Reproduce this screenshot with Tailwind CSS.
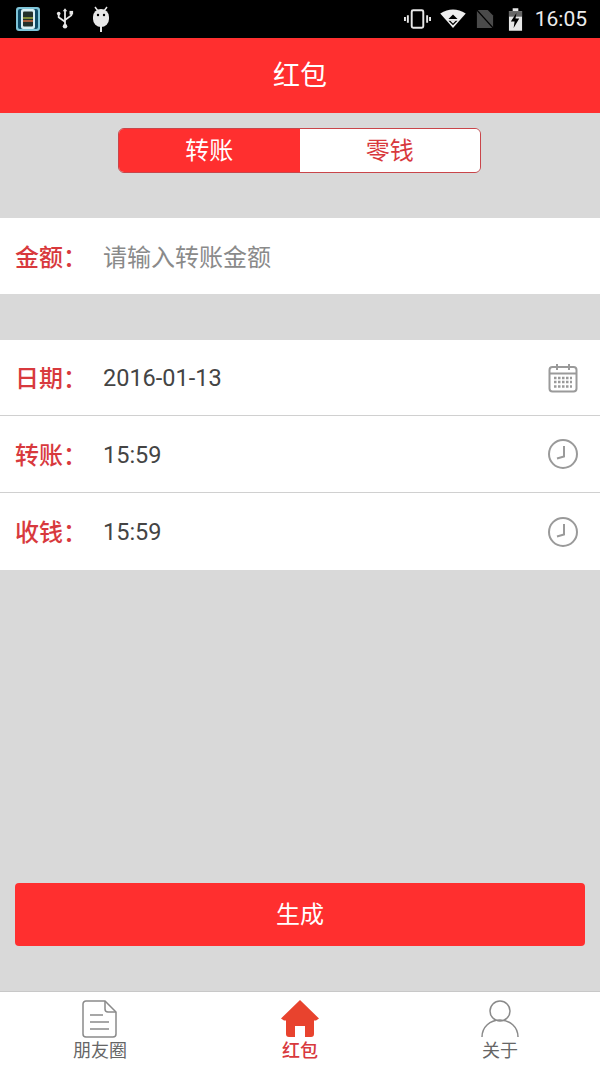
<!DOCTYPE html>
<html lang="zh">
<head>
<meta charset="utf-8">
<script src="https://cdn.jsdelivr.net/npm/@tailwindcss/browser@4"></script>
</head>
<body class="m-0">
<div class="w-[600px] h-[1067px] flex flex-col bg-[#d9d9d9] overflow-hidden font-['Roboto','Noto_Sans_CJK_SC',sans-serif]">
  <!-- status bar -->
  <div class="h-[38px] bg-black flex items-center shrink-0 pl-[15px] pr-[13px]">
    <svg class="w-[26px] h-[26px]" viewBox="0 0 26 26"><rect x="1" y="1" width="24" height="24" rx="3" fill="#7fc4d8"/><rect x="3" y="3" width="20" height="20" rx="2" fill="#0d4a66"/><rect x="6" y="3" width="14" height="20" rx="2" fill="#d8eef4"/><rect x="8" y="5.500" width="10" height="15" rx="1" fill="#22302c"/><rect x="8" y="11" width="10" height="2" fill="#7c8a3a"/><rect x="8" y="14" width="10" height="2" fill="#a85c3c"/></svg>
    <svg class="w-[18px] h-[24px] ml-[15px]" viewBox="0 0 20 24" fill="none" stroke="#e8e8e8" stroke-width="2"><path d="M10 2v18M3 6v4l7 5M17 5v3l-7 5"/><circle cx="10" cy="20" r="2.500" fill="#e8e8e8" stroke="none"/><circle cx="3" cy="6" r="2" fill="#e8e8e8" stroke="none"/><rect x="15" y="3" width="4" height="4" fill="#e8e8e8" stroke="none"/><path d="M10 0l2.500 3.500h-5z" fill="#e8e8e8" stroke="none"/></svg>
    <svg class="w-[20px] h-[26px] ml-[17px]" viewBox="0 0 20 26"><path d="M4 1l3 4M16 1l-3 4" stroke="#e8e8e8" stroke-width="1.500"/><path d="M2 11a8 8 0 0 1 16 0v2a8 8 0 0 1-16 0z" fill="#e8e8e8"/><circle cx="7" cy="9" r="1.200" fill="#000"/><circle cx="13" cy="9" r="1.200" fill="#000"/><rect x="9" y="20" width="2" height="6" fill="#e8e8e8"/></svg>
    <div class="flex-1"></div>
    <svg class="w-[27px] h-[22px]" viewBox="0 0 28 22" fill="none" stroke="#e8e8e8" stroke-width="2"><rect x="8" y="2" width="12" height="18" rx="1.500"/><path d="M4 7v8M24 7v8M1 9v4M27 9v4"/></svg>
    <svg class="w-[26px] h-[20px] ml-[9px]" viewBox="0 0 28 22"><path d="M0 5Q14-4 28 5L14 21z" fill="#efefef"/><path d="M9 11h10l-5-5zM9 13h10l-5 5z" fill="#000"/><path d="M10.500 12.500h7l-3.500 3.500z" fill="#efefef"/></svg>
    <svg class="w-[18px] h-[20px] ml-[10px]" viewBox="0 0 20 22"><path d="M1 1h12l6 6v14H1z" fill="#4a4a4a"/><path d="M0 0l20 22" stroke="#000" stroke-width="1.500"/></svg>
    <svg class="w-[15px] h-[23px] ml-[14px]" viewBox="0 0 16 24"><path d="M5 0h6v3h4v21H1V3h4z" fill="#e8e8e8"/><path d="M1 3h14v6H1z" fill="#666"/><path d="M9 5L3 14h4l-1 7 6-10H8z" fill="#000"/></svg>
    <span class="ml-[12px] text-[21px] leading-none text-[#ececec] font-['Roboto']">16:05</span>
  </div>
  <!-- header -->
  <div class="h-[75px] pt-[2px] bg-[#ff2f2f] flex items-center justify-center text-white text-[27px] shrink-0">红包</div>
  <!-- segmented -->
  <div class="pt-[15px] flex justify-center">
    <div class="w-[363px] h-[45px] mr-px rounded-[6px] border border-[#c9454a] flex overflow-hidden text-[24px]">
      <div class="flex-1 bg-[#ff2f2f] text-white flex items-center justify-center">转账</div>
      <div class="flex-1 bg-white text-[#d8393d] flex items-center justify-center">零钱</div>
    </div>
  </div>
  <!-- amount -->
  <div class="mt-[45px] h-[76px] bg-white flex items-center pl-[15px] text-[24px]">
    <span class="w-[88px] pt-[4px] font-medium text-[#d8393d]">金额：</span>
    <span class="pt-[4px] text-[#8a8a8a]">请输入转账金额</span>
  </div>
  <!-- details -->
  <div class="mt-[46px] bg-white flex flex-col divide-y divide-[#d0d0d0]">
    <div class="h-[76px] flex items-center pl-[15px] pr-[22px] text-[24px]">
      <span class="w-[88px] pt-[3px] font-medium text-[#d8393d]">日期：</span>
      <span class="pt-[3px] text-[23.500px] text-[#444] flex-1">2016-01-13</span>
      <svg class="w-[30px] h-[30px]" viewBox="0 0 30 30" fill="none" stroke="#9a9a9a" stroke-width="2"><rect x="1.500" y="4" width="27" height="24.500" rx="3"/><path d="M1.500 10.500h27M9 1v6M21 1v6"/><path d="M6 15h18M6 19h18M6 23.500h18" stroke-width="2.500" stroke-dasharray="2.500 1.500"/></svg>
    </div>
    <div class="h-[77px] flex items-center pl-[15px] pr-[22px] text-[24px]">
      <span class="w-[88px] pt-[3px] font-medium text-[#d8393d]">转账：</span>
      <span class="pt-[3px] text-[23.500px] text-[#444] flex-1">15:59</span>
      <svg class="w-[30px] h-[30px]" viewBox="0 0 30 30" fill="none" stroke="#9a9a9a" stroke-width="2"><circle cx="15" cy="15" r="14"/><path d="M16 7v10.500l-7 2"/></svg>
    </div>
    <div class="h-[77px] flex items-center pl-[15px] pr-[22px] text-[24px]">
      <span class="w-[88px] pt-[2px] font-medium text-[#d8393d]">收钱：</span>
      <span class="pt-[2px] text-[23.500px] text-[#444] flex-1">15:59</span>
      <svg class="w-[30px] h-[30px]" viewBox="0 0 30 30" fill="none" stroke="#9a9a9a" stroke-width="2"><circle cx="15" cy="15" r="14"/><path d="M16 7v10.500l-7 2"/></svg>
    </div>
  </div>
  <!-- button -->
  <div class="mt-auto px-[15px] pb-[45px]">
    <div class="h-[63px] rounded-[4px] bg-[#ff2f2f] flex items-center justify-center text-white text-[24px]">生成</div>
  </div>
  <!-- tabs -->
  <div class="h-[76px] bg-white border-t border-[#c8c8c8] grid grid-cols-3 shrink-0 text-[18px] leading-none">
    <div class="flex flex-col items-center pt-[8px] text-[#666]">
      <svg class="w-[36px] h-[38px] mr-[2px]" viewBox="0 0 36 38" fill="none" stroke="#8a8a8a" stroke-width="1.500"><path d="M5 1h19l11 11v22a3 3 0 0 1-3 3H5a3 3 0 0 1-3-3V4a3 3 0 0 1 3-3z"/><path d="M24 1v8a3 3 0 0 0 3 3h8M9 15h13M9 22h19M9 29h19"/></svg>
      <span class="mt-[4px]">朋友圈</span>
    </div>
    <div class="flex flex-col items-center pt-[8px] text-[#d8393d]">
      <svg class="w-[38px] h-[38px]" viewBox="0 0 38 38"><path d="M19 0L38 18.500 35 20.500H33V34a3 3 0 0 1-3 3H24V26H14V37H8a3 3 0 0 1-3-3V20.500H3L0 18.500z" fill="#e8432e"/></svg>
      <span class="mt-[4px] font-medium">红包</span>
    </div>
    <div class="flex flex-col items-center pt-[8px] text-[#666]">
      <svg class="w-[38px] h-[38px]" viewBox="0 0 38 38" fill="none" stroke="#8a8a8a" stroke-width="1.500"><circle cx="19" cy="11" r="10"/><path d="M1 37C1 27 9 20 19 20S37 27 37 37"/></svg>
      <span class="mt-[4px]">关于</span>
    </div>
  </div>
</div>
</body>
</html>
